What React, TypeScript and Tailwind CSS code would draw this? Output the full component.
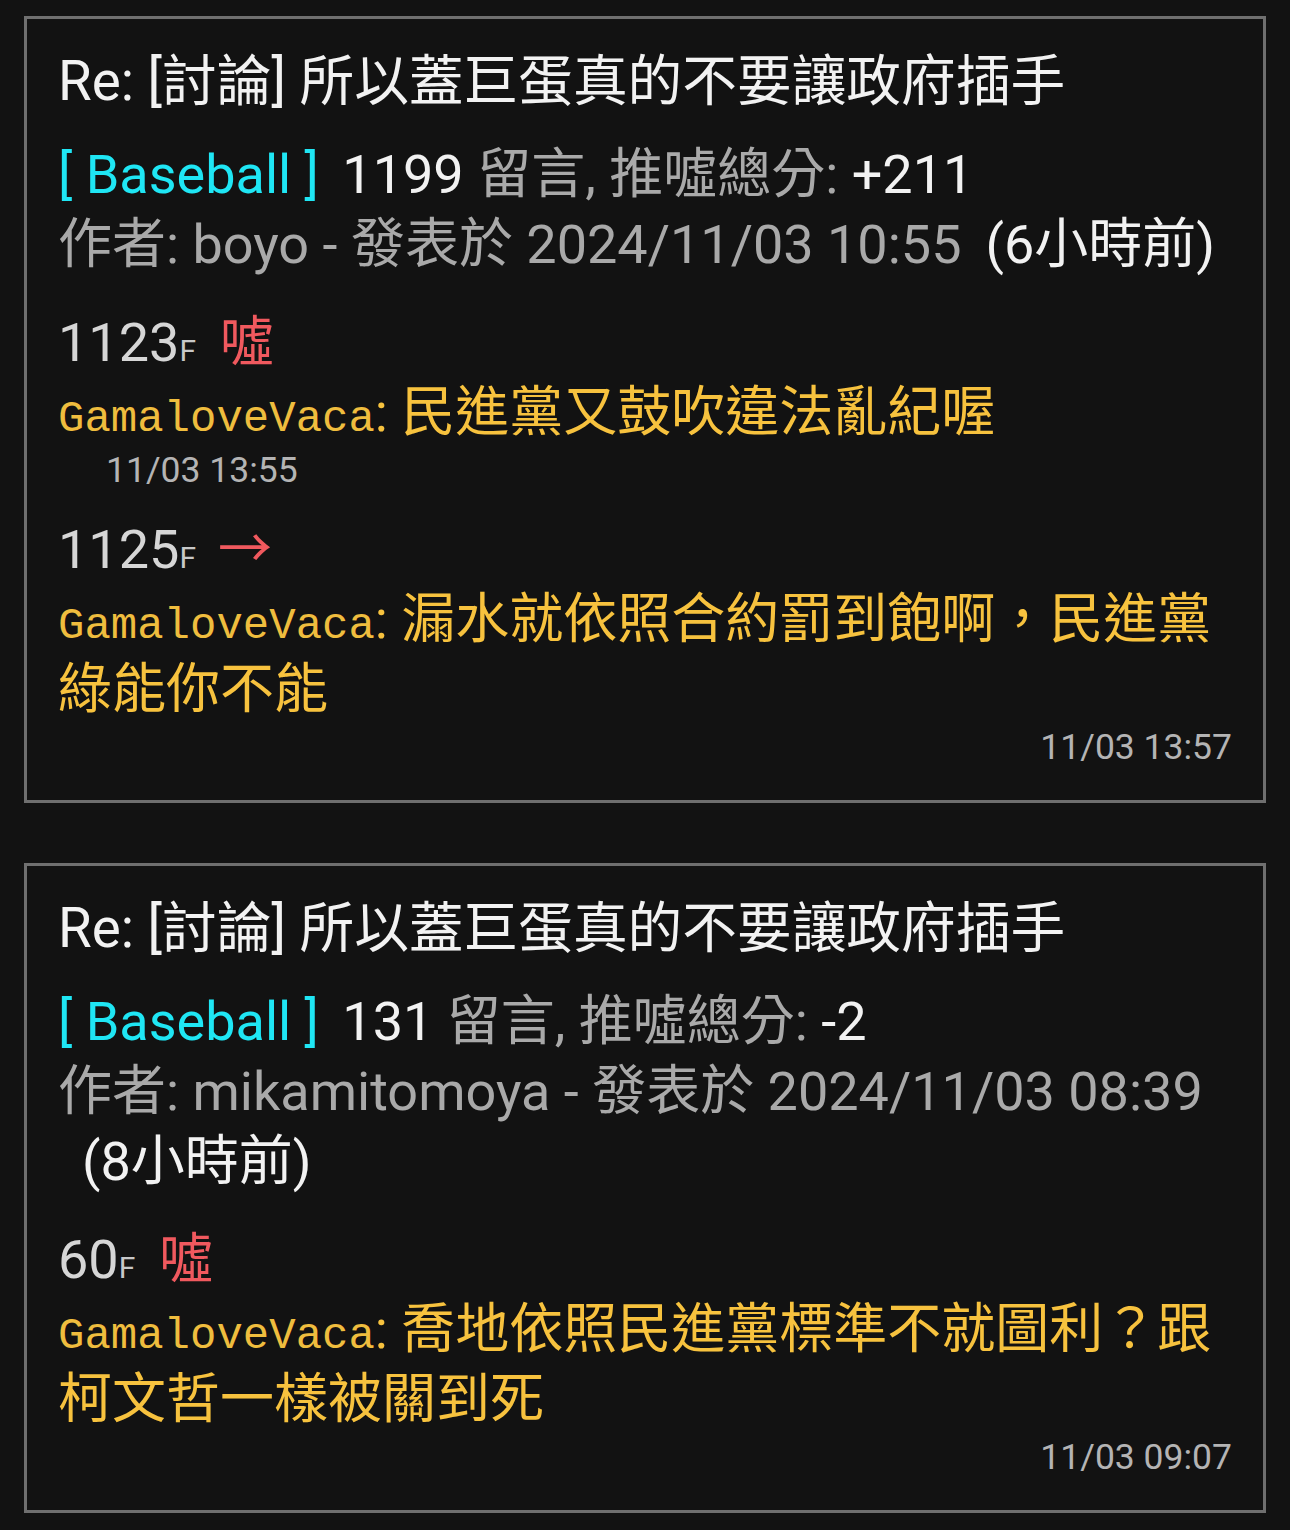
import React from 'react';

type Reply = {
  floor: string;
  tag: string;
  tagIsArrow?: boolean;
  user: string;
  text: string;
  time: string;
  timeAlign: 'left' | 'right';
};

type Post = {
  title: string;
  board: string;
  count: string;
  score: string;
  author: string;
  date: string;
  ago: string;
  replies: Reply[];
};

const posts: Post[] = [
  {
    title: 'Re: [討論] 所以蓋巨蛋真的不要讓政府插手',
    board: 'Baseball',
    count: '1199',
    score: '+211',
    author: 'boyo',
    date: '2024/11/03 10:55',
    ago: '(6小時前)',
    replies: [
      {
        floor: '1123',
        tag: '噓',
        user: 'GamaloveVaca',
        text: '民進黨又鼓吹違法亂紀喔',
        time: '11/03 13:55',
        timeAlign: 'left',
      },
      {
        floor: '1125',
        tag: '→',
        tagIsArrow: true,
        user: 'GamaloveVaca',
        text: '漏水就依照合約罰到飽啊，民進黨綠能你不能',
        time: '11/03 13:57',
        timeAlign: 'right',
      },
    ],
  },
  {
    title: 'Re: [討論] 所以蓋巨蛋真的不要讓政府插手',
    board: 'Baseball',
    count: '131',
    score: '-2',
    author: 'mikamitomoya',
    date: '2024/11/03 08:39',
    ago: '(8小時前)',
    replies: [
      {
        floor: '60',
        tag: '噓',
        user: 'GamaloveVaca',
        text: '喬地依照民進黨標準不就圖利？跟柯文哲一樣被關到死',
        time: '11/03 09:07',
        timeAlign: 'right',
      },
    ],
  },
];

const sans = "font-['Roboto','Noto_Sans_CJK_TC',sans-serif]";

const ReplyRow = ({ r, first }: { r: Reply; first: boolean }) => (
  <div className={first ? 'mt-[28px]' : 'mt-[18px]'}>
    <div className="text-[54px] leading-[70px]">
      <span className="text-[#d6d6d6]">{r.floor}</span>
      <span className="text-[30px] leading-none text-[#c8c8c8]">F</span>
      <span
        className={
          r.tagIsArrow
            ? "ml-[22px] text-[#f0595e] font-['Noto_Sans_CJK_TC',sans-serif]"
            : 'ml-[24px] text-[#f0595e]'
        }
      >
        {r.tag}
      </span>
    </div>
    <p className="text-[54px] leading-[70px] text-[#f7c23e] break-all">
      <span className="font-['Liberation_Mono',monospace] text-[44px] leading-none text-[#efbd3e]">{r.user}</span>
      : {r.text}
    </p>
    <div
      className={
        r.timeAlign === 'right'
          ? 'text-right text-[35.5px] leading-[44px] text-[#b4b4b4]'
          : 'pl-[48px] text-[35.5px] leading-[44px] text-[#b4b4b4]'
      }
    >
      {r.time}
    </div>
  </div>
);

const PostCard = ({ p }: { p: Post }) => (
  <div className="border-[3px] border-[#6f6f6f] bg-[#121212] pl-[31px] pr-[31px] pt-[27px] pb-[31px]">
    <h2 className="text-[54.7px] leading-[70px] font-normal text-[#f2f2f2] mb-[24px]">{p.title}</h2>
    <div className="text-[54px] leading-[70px] text-[#a9a9a9]">
      <span className="text-[#1fe6f4] mr-[10px]">[ {p.board} ]</span>{' '}
      <span className="text-[#f2f2f2]">{p.count}</span> 留言, 推噓總分:{' '}
      <span className="text-[#f2f2f2]">{p.score}</span>
    </div>
    <div className="text-[54px] leading-[70px] text-[#a9a9a9]">
      作者: {p.author} - 發表於 {p.date}
      <span className="inline-block ml-[24px] text-[#f2f2f2]">{p.ago}</span>
    </div>
    {p.replies.map((r, i) => (
      <ReplyRow key={r.floor} r={r} first={i === 0} />
    ))}
  </div>
);

export default function App() {
  return (
    <div className={`${sans} min-h-[1530px] w-[1290px] bg-[#121212] px-[24px] pt-[16px] pb-[20px]`}>
      <div className="flex flex-col gap-[60px]">
        {posts.map((p, i) => (
          <PostCard key={i} p={p} />
        ))}
      </div>
    </div>
  );
}
